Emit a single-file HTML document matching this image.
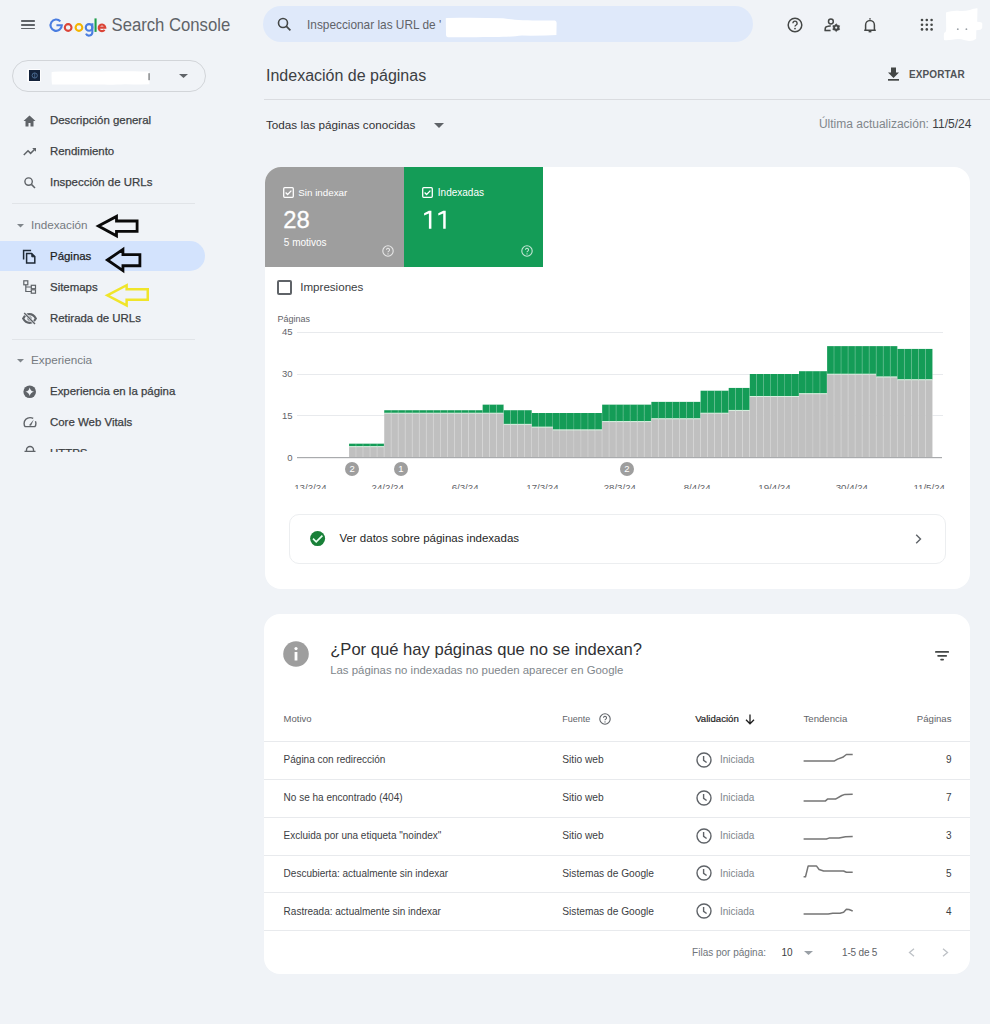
<!DOCTYPE html>
<html><head><meta charset="utf-8"><style>
html,body{margin:0;padding:0;width:990px;height:1024px;overflow:hidden;background:#f0f3f7;font-family:"Liberation Sans", sans-serif;}
.t{position:absolute;white-space:nowrap;line-height:1;}
svg{overflow:visible}
</style></head><body>
<div style="position:absolute;left:20.90px;top:19.90px;width:14.00px;height:1.80px;background:#5f6368;border-radius:0.8px"></div>
<div style="position:absolute;left:20.90px;top:23.75px;width:14.00px;height:1.80px;background:#5f6368;border-radius:0.8px"></div>
<div style="position:absolute;left:20.90px;top:27.60px;width:14.00px;height:1.80px;background:#5f6368;border-radius:0.8px"></div>
<svg style="position:absolute;left:0.00px;top:0.00px;" width="120" height="40" viewBox="0 0 120 40"><path d="M60.35 21.42A5.65 5.65 0 1 0 61.80 25.20H56.45" fill="none" stroke="#4a7de0" stroke-width="2.1"/><circle cx="68.15" cy="27.5" r="3.35" fill="none" stroke="#db4437" stroke-width="2.1"/><circle cx="78.95" cy="27.5" r="3.35" fill="none" stroke="#f4b400" stroke-width="2.1"/><circle cx="89.05" cy="27.4" r="3.3" fill="none" stroke="#4a7de0" stroke-width="2.1"/><path d="M92.35 23.2V32.3A3.3 3.3 0 0 1 86 33.6" fill="none" stroke="#4a7de0" stroke-width="2.1"/><path d="M95.55 18.4V31.9" fill="none" stroke="#1e9e4a" stroke-width="2.1"/><path d="M98.9 27.6H105.3A3.3 3.3 0 1 0 104.6 29.9" fill="none" stroke="#db4437" stroke-width="2.1"/></svg>
<div class="t" style="left:111.50px;top:18.36px;font-size:16.7px;color:#5f6368;font-weight:400;transform:scaleY(1.08);transform-origin:0 80%">Search Console</div>
<div style="position:absolute;left:262.50px;top:6.00px;width:490.50px;height:36.00px;background:#dfe9fa;border-radius:18px"></div>
<svg style="position:absolute;left:277.00px;top:17.00px;" width="16" height="16" viewBox="0 0 16 16"><circle cx="6" cy="6" r="4.5" fill="none" stroke="#444746" stroke-width="1.6"/><line x1="9.2" y1="9.2" x2="13.4" y2="13.4" stroke="#444746" stroke-width="1.7"/></svg>
<div class="t" style="left:307.00px;top:20.17px;font-size:11.85px;color:#5f6368;font-weight:400;">Inspeccionar las URL de '</div>
<svg style="position:absolute;left:0.00px;top:0.00px;" width="990" height="60" viewBox="0 0 990 60"><path d="M445.8 18.2Q447 17.6 470 17.8L503 18.2C514 20 526 20.6 555 20.4Q557 21 556.6 24L556.4 35Q545 35.8 522 35.6C510 37 498 37.4 448 37.2Q446 37 446 35z" fill="#fff"/></svg>
<svg style="position:absolute;left:787.00px;top:17.00px;" width="16" height="16" viewBox="0 0 16 16"><circle cx="8" cy="8" r="6.8" fill="none" stroke="#444746" stroke-width="1.5"/><path d="M5.9 6.2a2.1 2.1 0 1 1 3.2 1.8c-.7.4-1.1.8-1.1 1.6" fill="none" stroke="#444746" stroke-width="1.4"/><circle cx="8" cy="11.6" r=".9" fill="#444746"/></svg>
<svg style="position:absolute;left:0.00px;top:0.00px;" width="990" height="60" viewBox="0 0 990 60"><circle cx="830.9" cy="21.5" r="2.4" fill="none" stroke="#444746" stroke-width="1.5"/><path d="M825.2 30.6V28.8Q825.2 26.6 828 26.2Q829.5 25.9 830.8 26" fill="none" stroke="#444746" stroke-width="1.5"/><path d="M824.5 30.5H830.6" stroke="#444746" stroke-width="1.6"/><polygon points="836.20,23.80 837.65,25.19 839.58,25.75 839.10,27.70 839.58,29.65 837.65,30.21 836.20,31.60 834.75,30.21 832.82,29.65 833.30,27.70 832.82,25.75 834.75,25.19" fill="#444746" stroke="#444746" stroke-width="0.6" stroke-linejoin="round"/><circle cx="836.2" cy="27.7" r="1.1" fill="#f0f3f7"/></svg>
<svg style="position:absolute;left:862.00px;top:17.00px;" width="16" height="17" viewBox="0 0 16 17"><path d="M2.2 13.3h11.6M3.6 13.3V8a4.4 4.4 0 0 1 8.8 0v5.3" fill="none" stroke="#444746" stroke-width="1.5"/><line x1="8" y1="2.5" x2="8" y2="1.3" stroke="#444746" stroke-width="1.6"/><path d="M6.6 14.6h2.8" stroke="#444746" stroke-width="1.6"/></svg>
<svg style="position:absolute;left:919.80px;top:18.00px;" width="14" height="14" viewBox="0 0 14 14"><circle cx="2.0" cy="2.0" r="1.3" fill="#444746"/><circle cx="2.0" cy="6.7" r="1.3" fill="#444746"/><circle cx="2.0" cy="11.4" r="1.3" fill="#444746"/><circle cx="6.8" cy="2.0" r="1.3" fill="#444746"/><circle cx="6.8" cy="6.7" r="1.3" fill="#444746"/><circle cx="6.8" cy="11.4" r="1.3" fill="#444746"/><circle cx="11.6" cy="2.0" r="1.3" fill="#444746"/><circle cx="11.6" cy="6.7" r="1.3" fill="#444746"/><circle cx="11.6" cy="11.4" r="1.3" fill="#444746"/></svg>
<svg style="position:absolute;left:0.00px;top:0.00px;" width="990" height="60" viewBox="0 0 990 60"><path d="M946 12.4C950 11.5 954 10.4 958 10.8C962 11.2 966 11 970 10C973 9 975.5 8.2 977.5 8.4L977.2 21.8Q982 21.8 982.3 23.5L982.2 28Q981 30.3 976.3 30.2L976.2 38.8Q973 41.3 969 41C965 40.6 962 38.6 958 39C953 39.5 948 40.6 944 40Q943.6 35 944 33Q946 32.4 946.2 30z" fill="#fff"/><circle cx="957.8" cy="29.2" r="0.9" fill="#9aa0a6"/><circle cx="966.4" cy="29.2" r="0.9" fill="#9aa0a6"/></svg>
<div style="position:absolute;left:12.40px;top:60.00px;width:193.20px;height:31.80px;border:1px solid #d2d5d9;border-radius:16px;box-sizing:border-box"></div>
<div style="position:absolute;left:27.30px;top:68.60px;width:14.00px;height:13.60px;background:#fdfdfe;border-radius:1.5px"></div>
<div style="position:absolute;left:28.60px;top:69.90px;width:11.40px;height:11.00px;background:#13223a"></div>
<svg style="position:absolute;left:28.60px;top:69.90px;" width="12" height="11" viewBox="0 0 12 11"><circle cx="5.7" cy="5.5" r="2.6" fill="none" stroke="#4a6a90" stroke-width="1"/><path d="M5.7 2.9v5.2" stroke="#4a6a90" stroke-width="0.8"/></svg>
<svg style="position:absolute;left:0.00px;top:55.00px;" width="210" height="40" viewBox="0 0 210 40"><path d="M51.6 17.2Q52 16.6 60 16.6L100 16.4C120 16.2 135 16.4 149.3 16.6L149.4 29.3Q140 29.5 125 29.2C118 29.5 112 30 100 29.6L52 29.4Q51.4 25 51.6 17.2z" fill="#fff"/><rect x="148.6" y="18.2" width="0.9" height="7" fill="#3c4043"/></svg>
<svg style="position:absolute;left:179.00px;top:74.00px;" width="9" height="4" viewBox="0 0 9 4"><path d="M0 0h9L4.5 4z" fill="#5f6368"/></svg>
<div style="position:absolute;left:0.00px;top:240.80px;width:204.50px;height:30.60px;background:#d3e3fd;border-radius:0 15.3px 15.3px 0"></div>
<div class="t" style="left:50.00px;top:115.11px;font-size:11.45px;color:#3c4043;font-weight:400;-webkit-text-stroke:0.25px #3c4043">Descripción general</div>
<div class="t" style="left:50.00px;top:146.11px;font-size:11.45px;color:#3c4043;font-weight:400;-webkit-text-stroke:0.25px #3c4043">Rendimiento</div>
<div class="t" style="left:50.00px;top:177.11px;font-size:11.45px;color:#3c4043;font-weight:400;-webkit-text-stroke:0.25px #3c4043">Inspección de URLs</div>
<div class="t" style="left:50.00px;top:251.11px;font-size:11.45px;color:#1f1f1f;font-weight:400;-webkit-text-stroke:0.25px #1f1f1f">Páginas</div>
<div class="t" style="left:50.00px;top:282.11px;font-size:11.45px;color:#3c4043;font-weight:400;-webkit-text-stroke:0.25px #3c4043">Sitemaps</div>
<div class="t" style="left:50.00px;top:313.11px;font-size:11.45px;color:#3c4043;font-weight:400;-webkit-text-stroke:0.25px #3c4043">Retirada de URLs</div>
<div class="t" style="left:50.00px;top:386.11px;font-size:11.45px;color:#3c4043;font-weight:400;-webkit-text-stroke:0.25px #3c4043">Experiencia en la página</div>
<div class="t" style="left:50.00px;top:417.11px;font-size:11.45px;color:#3c4043;font-weight:400;-webkit-text-stroke:0.25px #3c4043">Core Web Vitals</div>
<div class="t" style="left:50.00px;top:448.11px;font-size:11.45px;color:#3c4043;font-weight:400;-webkit-text-stroke:0.25px #3c4043">HTTPS</div>
<div class="t" style="left:31.00px;top:218.70px;font-size:11.7px;color:#757a7f;font-weight:400;">Indexación</div>
<svg style="position:absolute;left:16.50px;top:223.50px;" width="7" height="4" viewBox="0 0 7 4"><path d="M0 0h7L3.5 3.5z" fill="#80868b"/></svg>
<div class="t" style="left:31.00px;top:353.70px;font-size:11.7px;color:#757a7f;font-weight:400;">Experiencia</div>
<svg style="position:absolute;left:16.50px;top:358.50px;" width="7" height="4" viewBox="0 0 7 4"><path d="M0 0h7L3.5 3.5z" fill="#80868b"/></svg>
<div style="position:absolute;left:12.00px;top:203.00px;width:183.00px;height:1.00px;background:#e1e4e8"></div>
<div style="position:absolute;left:12.00px;top:339.00px;width:183.00px;height:1.00px;background:#e1e4e8"></div>
<svg style="position:absolute;left:23.00px;top:114.50px;" width="13" height="12" viewBox="0 0 13 12"><path d="M6.5 0.5L0.5 6h2v5.5h3V8h2v3.5h3V6h2z" fill="#5f6368"/></svg>
<svg style="position:absolute;left:22.50px;top:147.00px;" width="14" height="9" viewBox="0 0 14 9"><path d="M0.8 8L5 3.8l2.6 2.6L12 2" fill="none" stroke="#5f6368" stroke-width="1.5"/><path d="M9.2 1h3.8v3.8z" fill="#5f6368"/></svg>
<svg style="position:absolute;left:23.50px;top:176.80px;" width="12" height="12" viewBox="0 0 12 12"><circle cx="4.6" cy="4.6" r="3.7" fill="none" stroke="#5f6368" stroke-width="1.4"/><line x1="7.4" y1="7.4" x2="11" y2="11" stroke="#5f6368" stroke-width="1.5"/></svg>
<svg style="position:absolute;left:22.00px;top:248.50px;" width="14" height="15" viewBox="0 0 14 15"><path d="M4.6 4.4V14h8.2V7.6L9.6 4.4z" fill="none" stroke="#1f2a36" stroke-width="1.5"/><path d="M9.8 4.6v3.2h3" fill="#1f2a36" stroke="#1f2a36" stroke-width="1"/><path d="M1.6 10.5V1.4h7.5" fill="none" stroke="#1f2a36" stroke-width="1.5"/></svg>
<svg style="position:absolute;left:22.50px;top:280.00px;" width="14" height="14" viewBox="0 0 14 14"><rect x="0.8" y="0.8" width="4" height="4" fill="none" stroke="#5f6368" stroke-width="1.2"/><rect x="8.3" y="5.3" width="4.2" height="3.4" fill="none" stroke="#5f6368" stroke-width="1.2"/><rect x="8.3" y="9.8" width="4.2" height="3.4" fill="none" stroke="#5f6368" stroke-width="1.2"/><path d="M2.8 4.8V11.5h5.5M2.8 7h5.5" fill="none" stroke="#5f6368" stroke-width="1.2"/></svg>
<svg style="position:absolute;left:22.00px;top:312.00px;" width="15" height="13" viewBox="0 0 15 13"><path d="M1.2 6.5C2.8 3.6 4.9 2.2 7.5 2.2s4.7 1.4 6.3 4.3C12.2 9.4 10.1 10.8 7.5 10.8S2.8 9.4 1.2 6.5z" fill="none" stroke="#5f6368" stroke-width="2.2"/><circle cx="7.5" cy="6.5" r="2.2" fill="#5f6368"/><line x1="2.2" y1="1" x2="13" y2="12" stroke="#f0f3f7" stroke-width="2.6"/><line x1="2.2" y1="1" x2="13" y2="12" stroke="#5f6368" stroke-width="1.4"/></svg>
<svg style="position:absolute;left:22.50px;top:384.50px;" width="14" height="14" viewBox="0 0 14 14"><circle cx="6.7" cy="6.7" r="6.3" fill="#5f6368"/><path d="M6.7 2.4Q7.4 6 11 6.7Q7.4 7.4 6.7 11Q6 7.4 2.4 6.7Q6 6 6.7 2.4z" fill="#f0f3f7"/></svg>
<svg style="position:absolute;left:22.50px;top:416.00px;" width="14" height="12" viewBox="0 0 14 12"><path d="M10.2 2.3Q8.8 1.6 7 1.6A5.9 5.9 0 0 0 1.1 7.5Q1.1 9.5 2.1 10.6H11.9Q12.9 9.5 12.9 7.5Q12.9 6.3 12.4 5.3" fill="none" stroke="#5f6368" stroke-width="1.4" stroke-linejoin="round"/><path d="M6 9.2L10.8 3.4L8 9.8z" fill="#5f6368"/></svg>
<svg style="position:absolute;left:22.50px;top:446.00px;" width="14" height="6" viewBox="0 0 14 6"><path d="M3.5 6V4a3.5 3.5 0 0 1 7 0v2M1.5 5.5h11" fill="none" stroke="#5f6368" stroke-width="1.4"/></svg>
<div style="position:absolute;left:0.00px;top:452.00px;width:250.00px;height:30.00px;background:#f0f3f7"></div>
<svg style="position:absolute;left:96.50px;top:215.20px;" width="42" height="23" viewBox="0 0 42 23"><path d="M1.4 11.100000000000009 L19.505 1.4 L19.505 5.994000000000005 L40.1 5.994000000000005 L40.1 16.42800000000001 L19.505 16.42800000000001 L19.505 20.80000000000002 Z" fill="none" stroke="#0a0a0a" stroke-width="2.8" stroke-linejoin="miter"/></svg>
<svg style="position:absolute;left:105.50px;top:247.60px;" width="36" height="25" viewBox="0 0 36 25"><path d="M1.4 12.000000000000014 L16.944000000000006 1.4 L16.944000000000006 6.720000000000009 L33.90000000000001 6.720000000000009 L33.90000000000001 17.76000000000002 L16.944000000000006 17.76000000000002 L16.944000000000006 22.60000000000003 Z" fill="none" stroke="#0a0a0a" stroke-width="2.8" stroke-linejoin="miter"/></svg>
<svg style="position:absolute;left:105.50px;top:284.20px;" width="44" height="24" viewBox="0 0 44 24"><path d="M1.25 11.300000000000011 L20.64 1.25 L20.64 5.198000000000006 L41.75 5.198000000000006 L41.75 15.820000000000014 L20.64 15.820000000000014 L20.64 21.350000000000023 Z" fill="none" stroke="#f0e52a" stroke-width="2.5" stroke-linejoin="miter"/></svg>
<div class="t" style="left:266.00px;top:68.06px;font-size:16px;color:#3c4043;font-weight:400;">Indexación de páginas</div>
<svg style="position:absolute;left:887.00px;top:66.50px;" width="13" height="14" viewBox="0 0 13 14"><path d="M4 0.5h5v5h3l-5.5 5.5L1 5.5h3z" fill="#444746"/><rect x="1" y="12" width="11" height="1.7" fill="#444746"/></svg>
<div class="t" style="left:909.00px;top:69.83px;font-size:10px;color:#505357;font-weight:700;letter-spacing:0.12px">EXPORTAR</div>
<div style="position:absolute;left:264.00px;top:99.00px;width:726.00px;height:1.00px;background:#dadce0"></div>
<div class="t" style="left:266.00px;top:118.90px;font-size:11.7px;color:#303134;font-weight:400;">Todas las páginas conocidas</div>
<svg style="position:absolute;left:433.50px;top:122.50px;" width="10" height="5" viewBox="0 0 10 5"><path d="M0 0h10L5 5z" fill="#5f6368"/></svg>
<div class="t" style="right:18.60px;top:117.64px;font-size:12px;color:#3c4043;font-weight:400;"><span style="color:#80868b">Última actualización:</span> 11/5/24</div>
<div style="position:absolute;left:264.50px;top:167.00px;width:705.50px;height:421.50px;background:#fff;border-radius:16px"></div>
<div style="position:absolute;left:264.50px;top:167.00px;width:139.30px;height:99.70px;background:#9e9e9e;border-top-left-radius:16px"></div>
<div style="position:absolute;left:403.80px;top:167.00px;width:139.00px;height:99.70px;background:#149c57"></div>
<svg style="position:absolute;left:282.80px;top:187.00px;" width="11" height="11" viewBox="0 0 11 11"><rect x="0.7" y="0.7" width="9.6" height="9.6" rx="1" fill="none" stroke="#fff" stroke-width="1.3"/><path d="M2.6 5.5l2 2 3.8-3.9" fill="none" stroke="#fff" stroke-width="1.3"/></svg>
<svg style="position:absolute;left:422.10px;top:187.00px;" width="11" height="11" viewBox="0 0 11 11"><rect x="0.7" y="0.7" width="9.6" height="9.6" rx="1" fill="none" stroke="#fff" stroke-width="1.3"/><path d="M2.6 5.5l2 2 3.8-3.9" fill="none" stroke="#fff" stroke-width="1.3"/></svg>
<div class="t" style="left:298.30px;top:187.90px;font-size:9.8px;color:#fff;font-weight:400;">Sin indexar</div>
<div class="t" style="left:437.80px;top:188.03px;font-size:10px;color:#fff;font-weight:400;">Indexadas</div>
<div class="t" style="left:283.30px;top:208.45px;font-size:23.8px;color:#fff;font-weight:400;-webkit-text-stroke:0.3px #fff">28</div>
<svg style="position:absolute;left:0.00px;top:0.00px;" width="990" height="300" viewBox="0 0 990 300"><path d="M431.4 210.7V228.7H428.9V213.6L424.1 215.6V213.3L428.9 210.7z" fill="#fff"/><path d="M445.7 210.7V228.7H443.2V213.6L438.3 215.6V213.3L443.2 210.7z" fill="#fff"/></svg>
<div class="t" style="left:283.80px;top:237.73px;font-size:10px;color:#fff;font-weight:400;">5 motivos</div>
<svg style="position:absolute;left:381.50px;top:244.60px;" width="12" height="12" viewBox="0 0 12 12"><circle cx="6" cy="6" r="5.2" fill="none" stroke="rgba(255,255,255,.75)" stroke-width="1.1"/><path d="M4.5 4.8a1.5 1.5 0 1 1 2.3 1.3c-.5.3-.8.6-.8 1.2" fill="none" stroke="rgba(255,255,255,.75)" stroke-width="1.1"/><circle cx="6" cy="8.9" r=".7" fill="rgba(255,255,255,.75)"/></svg>
<svg style="position:absolute;left:521.00px;top:244.50px;" width="12" height="12" viewBox="0 0 12 12"><circle cx="6" cy="6" r="5.2" fill="none" stroke="rgba(255,255,255,.75)" stroke-width="1.1"/><path d="M4.5 4.8a1.5 1.5 0 1 1 2.3 1.3c-.5.3-.8.6-.8 1.2" fill="none" stroke="rgba(255,255,255,.75)" stroke-width="1.1"/><circle cx="6" cy="8.9" r=".7" fill="rgba(255,255,255,.75)"/></svg>
<div style="position:absolute;left:277.10px;top:279.70px;width:15.00px;height:15.00px;border:2px solid #5f6368;border-radius:2px;box-sizing:border-box"></div>
<div class="t" style="left:300.20px;top:281.48px;font-size:11.6px;color:#3c4043;font-weight:400;">Impresiones</div>
<div class="t" style="left:277.60px;top:314.88px;font-size:9px;color:#5f6368;font-weight:400;">Páginas</div>
<div class="t" style="right:697.50px;top:327.36px;font-size:9.5px;color:#5f6368;font-weight:400;">45</div>
<div style="position:absolute;left:296.50px;top:331.70px;width:646.00px;height:1.00px;background:#e8eaed"></div>
<div class="t" style="right:697.50px;top:369.16px;font-size:9.5px;color:#5f6368;font-weight:400;">30</div>
<div style="position:absolute;left:296.50px;top:373.50px;width:646.00px;height:1.00px;background:#e8eaed"></div>
<div class="t" style="right:697.50px;top:410.96px;font-size:9.5px;color:#5f6368;font-weight:400;">15</div>
<div style="position:absolute;left:296.50px;top:415.30px;width:646.00px;height:1.00px;background:#e8eaed"></div>
<div class="t" style="right:697.50px;top:452.76px;font-size:9.5px;color:#5f6368;font-weight:400;">0</div>
<svg style="position:absolute;left:0.00px;top:0.00px;pointer-events:none" width="990" height="1024" viewBox="0 0 990 1024"><rect x="349.08" y="446.45" width="7.03" height="11.15" fill="#c0c0c0"/><rect x="349.08" y="443.67" width="7.03" height="2.79" fill="#149c57"/><rect x="349.08" y="446.15" width="7.03" height="1" fill="#d7f0df"/><rect x="355.61" y="443.67" width="0.7" height="13.93" fill="rgba(255,255,255,.35)"/><rect x="356.11" y="446.45" width="7.03" height="11.15" fill="#c0c0c0"/><rect x="356.11" y="443.67" width="7.03" height="2.79" fill="#149c57"/><rect x="356.11" y="446.15" width="7.03" height="1" fill="#d7f0df"/><rect x="362.64" y="443.67" width="0.7" height="13.93" fill="rgba(255,255,255,.35)"/><rect x="363.14" y="446.45" width="7.03" height="11.15" fill="#c0c0c0"/><rect x="363.14" y="443.67" width="7.03" height="2.79" fill="#149c57"/><rect x="363.14" y="446.15" width="7.03" height="1" fill="#d7f0df"/><rect x="369.67" y="443.67" width="0.7" height="13.93" fill="rgba(255,255,255,.35)"/><rect x="370.17" y="446.45" width="7.03" height="11.15" fill="#c0c0c0"/><rect x="370.17" y="443.67" width="7.03" height="2.79" fill="#149c57"/><rect x="370.17" y="446.15" width="7.03" height="1" fill="#d7f0df"/><rect x="376.70" y="443.67" width="0.7" height="13.93" fill="rgba(255,255,255,.35)"/><rect x="377.20" y="446.45" width="7.03" height="11.15" fill="#c0c0c0"/><rect x="377.20" y="443.67" width="7.03" height="2.79" fill="#149c57"/><rect x="377.20" y="446.15" width="7.03" height="1" fill="#d7f0df"/><rect x="383.73" y="443.67" width="0.7" height="13.93" fill="rgba(255,255,255,.35)"/><rect x="384.23" y="413.01" width="7.03" height="44.59" fill="#c0c0c0"/><rect x="384.23" y="410.23" width="7.03" height="2.79" fill="#149c57"/><rect x="384.23" y="412.71" width="7.03" height="1" fill="#d7f0df"/><rect x="390.76" y="410.23" width="0.7" height="47.37" fill="rgba(255,255,255,.35)"/><rect x="391.26" y="413.01" width="7.03" height="44.59" fill="#c0c0c0"/><rect x="391.26" y="410.23" width="7.03" height="2.79" fill="#149c57"/><rect x="391.26" y="412.71" width="7.03" height="1" fill="#d7f0df"/><rect x="397.79" y="410.23" width="0.7" height="47.37" fill="rgba(255,255,255,.35)"/><rect x="398.29" y="413.01" width="7.03" height="44.59" fill="#c0c0c0"/><rect x="398.29" y="410.23" width="7.03" height="2.79" fill="#149c57"/><rect x="398.29" y="412.71" width="7.03" height="1" fill="#d7f0df"/><rect x="404.82" y="410.23" width="0.7" height="47.37" fill="rgba(255,255,255,.35)"/><rect x="405.32" y="413.01" width="7.03" height="44.59" fill="#c0c0c0"/><rect x="405.32" y="410.23" width="7.03" height="2.79" fill="#149c57"/><rect x="405.32" y="412.71" width="7.03" height="1" fill="#d7f0df"/><rect x="411.85" y="410.23" width="0.7" height="47.37" fill="rgba(255,255,255,.35)"/><rect x="412.35" y="413.01" width="7.03" height="44.59" fill="#c0c0c0"/><rect x="412.35" y="410.23" width="7.03" height="2.79" fill="#149c57"/><rect x="412.35" y="412.71" width="7.03" height="1" fill="#d7f0df"/><rect x="418.88" y="410.23" width="0.7" height="47.37" fill="rgba(255,255,255,.35)"/><rect x="419.38" y="413.01" width="7.03" height="44.59" fill="#c0c0c0"/><rect x="419.38" y="410.23" width="7.03" height="2.79" fill="#149c57"/><rect x="419.38" y="412.71" width="7.03" height="1" fill="#d7f0df"/><rect x="425.91" y="410.23" width="0.7" height="47.37" fill="rgba(255,255,255,.35)"/><rect x="426.41" y="413.01" width="7.03" height="44.59" fill="#c0c0c0"/><rect x="426.41" y="410.23" width="7.03" height="2.79" fill="#149c57"/><rect x="426.41" y="412.71" width="7.03" height="1" fill="#d7f0df"/><rect x="432.94" y="410.23" width="0.7" height="47.37" fill="rgba(255,255,255,.35)"/><rect x="433.44" y="413.01" width="7.03" height="44.59" fill="#c0c0c0"/><rect x="433.44" y="410.23" width="7.03" height="2.79" fill="#149c57"/><rect x="433.44" y="412.71" width="7.03" height="1" fill="#d7f0df"/><rect x="439.97" y="410.23" width="0.7" height="47.37" fill="rgba(255,255,255,.35)"/><rect x="440.47" y="413.01" width="7.03" height="44.59" fill="#c0c0c0"/><rect x="440.47" y="410.23" width="7.03" height="2.79" fill="#149c57"/><rect x="440.47" y="412.71" width="7.03" height="1" fill="#d7f0df"/><rect x="447.00" y="410.23" width="0.7" height="47.37" fill="rgba(255,255,255,.35)"/><rect x="447.50" y="413.01" width="7.03" height="44.59" fill="#c0c0c0"/><rect x="447.50" y="410.23" width="7.03" height="2.79" fill="#149c57"/><rect x="447.50" y="412.71" width="7.03" height="1" fill="#d7f0df"/><rect x="454.03" y="410.23" width="0.7" height="47.37" fill="rgba(255,255,255,.35)"/><rect x="454.53" y="413.01" width="7.03" height="44.59" fill="#c0c0c0"/><rect x="454.53" y="410.23" width="7.03" height="2.79" fill="#149c57"/><rect x="454.53" y="412.71" width="7.03" height="1" fill="#d7f0df"/><rect x="461.06" y="410.23" width="0.7" height="47.37" fill="rgba(255,255,255,.35)"/><rect x="461.56" y="413.01" width="7.03" height="44.59" fill="#c0c0c0"/><rect x="461.56" y="410.23" width="7.03" height="2.79" fill="#149c57"/><rect x="461.56" y="412.71" width="7.03" height="1" fill="#d7f0df"/><rect x="468.09" y="410.23" width="0.7" height="47.37" fill="rgba(255,255,255,.35)"/><rect x="468.59" y="413.01" width="7.03" height="44.59" fill="#c0c0c0"/><rect x="468.59" y="410.23" width="7.03" height="2.79" fill="#149c57"/><rect x="468.59" y="412.71" width="7.03" height="1" fill="#d7f0df"/><rect x="475.12" y="410.23" width="0.7" height="47.37" fill="rgba(255,255,255,.35)"/><rect x="475.62" y="413.01" width="7.03" height="44.59" fill="#c0c0c0"/><rect x="475.62" y="410.23" width="7.03" height="2.79" fill="#149c57"/><rect x="475.62" y="412.71" width="7.03" height="1" fill="#d7f0df"/><rect x="482.15" y="410.23" width="0.7" height="47.37" fill="rgba(255,255,255,.35)"/><rect x="482.65" y="413.01" width="7.03" height="44.59" fill="#c0c0c0"/><rect x="482.65" y="404.65" width="7.03" height="8.36" fill="#149c57"/><rect x="482.65" y="412.71" width="7.03" height="1" fill="#d7f0df"/><rect x="489.18" y="404.65" width="0.7" height="52.95" fill="rgba(255,255,255,.35)"/><rect x="489.68" y="413.01" width="7.03" height="44.59" fill="#c0c0c0"/><rect x="489.68" y="404.65" width="7.03" height="8.36" fill="#149c57"/><rect x="489.68" y="412.71" width="7.03" height="1" fill="#d7f0df"/><rect x="496.21" y="404.65" width="0.7" height="52.95" fill="rgba(255,255,255,.35)"/><rect x="496.71" y="413.01" width="7.03" height="44.59" fill="#c0c0c0"/><rect x="496.71" y="404.65" width="7.03" height="8.36" fill="#149c57"/><rect x="496.71" y="412.71" width="7.03" height="1" fill="#d7f0df"/><rect x="503.24" y="404.65" width="0.7" height="52.95" fill="rgba(255,255,255,.35)"/><rect x="503.74" y="424.16" width="7.03" height="33.44" fill="#c0c0c0"/><rect x="503.74" y="410.23" width="7.03" height="13.93" fill="#149c57"/><rect x="503.74" y="423.86" width="7.03" height="1" fill="#d7f0df"/><rect x="510.27" y="410.23" width="0.7" height="47.37" fill="rgba(255,255,255,.35)"/><rect x="510.77" y="424.16" width="7.03" height="33.44" fill="#c0c0c0"/><rect x="510.77" y="410.23" width="7.03" height="13.93" fill="#149c57"/><rect x="510.77" y="423.86" width="7.03" height="1" fill="#d7f0df"/><rect x="517.30" y="410.23" width="0.7" height="47.37" fill="rgba(255,255,255,.35)"/><rect x="517.80" y="424.16" width="7.03" height="33.44" fill="#c0c0c0"/><rect x="517.80" y="410.23" width="7.03" height="13.93" fill="#149c57"/><rect x="517.80" y="423.86" width="7.03" height="1" fill="#d7f0df"/><rect x="524.33" y="410.23" width="0.7" height="47.37" fill="rgba(255,255,255,.35)"/><rect x="524.83" y="424.16" width="7.03" height="33.44" fill="#c0c0c0"/><rect x="524.83" y="410.23" width="7.03" height="13.93" fill="#149c57"/><rect x="524.83" y="423.86" width="7.03" height="1" fill="#d7f0df"/><rect x="531.36" y="410.23" width="0.7" height="47.37" fill="rgba(255,255,255,.35)"/><rect x="531.86" y="426.95" width="7.03" height="30.65" fill="#c0c0c0"/><rect x="531.86" y="413.01" width="7.03" height="13.93" fill="#149c57"/><rect x="531.86" y="426.65" width="7.03" height="1" fill="#d7f0df"/><rect x="538.39" y="413.01" width="0.7" height="44.59" fill="rgba(255,255,255,.35)"/><rect x="538.89" y="426.95" width="7.03" height="30.65" fill="#c0c0c0"/><rect x="538.89" y="413.01" width="7.03" height="13.93" fill="#149c57"/><rect x="538.89" y="426.65" width="7.03" height="1" fill="#d7f0df"/><rect x="545.42" y="413.01" width="0.7" height="44.59" fill="rgba(255,255,255,.35)"/><rect x="545.92" y="426.95" width="7.03" height="30.65" fill="#c0c0c0"/><rect x="545.92" y="413.01" width="7.03" height="13.93" fill="#149c57"/><rect x="545.92" y="426.65" width="7.03" height="1" fill="#d7f0df"/><rect x="552.45" y="413.01" width="0.7" height="44.59" fill="rgba(255,255,255,.35)"/><rect x="552.95" y="429.73" width="7.03" height="27.87" fill="#c0c0c0"/><rect x="552.95" y="413.01" width="7.03" height="16.72" fill="#149c57"/><rect x="552.95" y="429.43" width="7.03" height="1" fill="#d7f0df"/><rect x="559.48" y="413.01" width="0.7" height="44.59" fill="rgba(255,255,255,.35)"/><rect x="559.98" y="429.73" width="7.03" height="27.87" fill="#c0c0c0"/><rect x="559.98" y="413.01" width="7.03" height="16.72" fill="#149c57"/><rect x="559.98" y="429.43" width="7.03" height="1" fill="#d7f0df"/><rect x="566.51" y="413.01" width="0.7" height="44.59" fill="rgba(255,255,255,.35)"/><rect x="567.01" y="429.73" width="7.03" height="27.87" fill="#c0c0c0"/><rect x="567.01" y="413.01" width="7.03" height="16.72" fill="#149c57"/><rect x="567.01" y="429.43" width="7.03" height="1" fill="#d7f0df"/><rect x="573.54" y="413.01" width="0.7" height="44.59" fill="rgba(255,255,255,.35)"/><rect x="574.04" y="429.73" width="7.03" height="27.87" fill="#c0c0c0"/><rect x="574.04" y="413.01" width="7.03" height="16.72" fill="#149c57"/><rect x="574.04" y="429.43" width="7.03" height="1" fill="#d7f0df"/><rect x="580.57" y="413.01" width="0.7" height="44.59" fill="rgba(255,255,255,.35)"/><rect x="581.07" y="429.73" width="7.03" height="27.87" fill="#c0c0c0"/><rect x="581.07" y="413.01" width="7.03" height="16.72" fill="#149c57"/><rect x="581.07" y="429.43" width="7.03" height="1" fill="#d7f0df"/><rect x="587.60" y="413.01" width="0.7" height="44.59" fill="rgba(255,255,255,.35)"/><rect x="588.10" y="429.73" width="7.03" height="27.87" fill="#c0c0c0"/><rect x="588.10" y="413.01" width="7.03" height="16.72" fill="#149c57"/><rect x="588.10" y="429.43" width="7.03" height="1" fill="#d7f0df"/><rect x="594.63" y="413.01" width="0.7" height="44.59" fill="rgba(255,255,255,.35)"/><rect x="595.13" y="429.73" width="7.03" height="27.87" fill="#c0c0c0"/><rect x="595.13" y="413.01" width="7.03" height="16.72" fill="#149c57"/><rect x="595.13" y="429.43" width="7.03" height="1" fill="#d7f0df"/><rect x="601.66" y="413.01" width="0.7" height="44.59" fill="rgba(255,255,255,.35)"/><rect x="602.16" y="421.37" width="7.03" height="36.23" fill="#c0c0c0"/><rect x="602.16" y="404.65" width="7.03" height="16.72" fill="#149c57"/><rect x="602.16" y="421.07" width="7.03" height="1" fill="#d7f0df"/><rect x="608.69" y="404.65" width="0.7" height="52.95" fill="rgba(255,255,255,.35)"/><rect x="609.19" y="421.37" width="7.03" height="36.23" fill="#c0c0c0"/><rect x="609.19" y="404.65" width="7.03" height="16.72" fill="#149c57"/><rect x="609.19" y="421.07" width="7.03" height="1" fill="#d7f0df"/><rect x="615.72" y="404.65" width="0.7" height="52.95" fill="rgba(255,255,255,.35)"/><rect x="616.22" y="421.37" width="7.03" height="36.23" fill="#c0c0c0"/><rect x="616.22" y="404.65" width="7.03" height="16.72" fill="#149c57"/><rect x="616.22" y="421.07" width="7.03" height="1" fill="#d7f0df"/><rect x="622.75" y="404.65" width="0.7" height="52.95" fill="rgba(255,255,255,.35)"/><rect x="623.25" y="421.37" width="7.03" height="36.23" fill="#c0c0c0"/><rect x="623.25" y="404.65" width="7.03" height="16.72" fill="#149c57"/><rect x="623.25" y="421.07" width="7.03" height="1" fill="#d7f0df"/><rect x="629.78" y="404.65" width="0.7" height="52.95" fill="rgba(255,255,255,.35)"/><rect x="630.28" y="421.37" width="7.03" height="36.23" fill="#c0c0c0"/><rect x="630.28" y="404.65" width="7.03" height="16.72" fill="#149c57"/><rect x="630.28" y="421.07" width="7.03" height="1" fill="#d7f0df"/><rect x="636.81" y="404.65" width="0.7" height="52.95" fill="rgba(255,255,255,.35)"/><rect x="637.31" y="421.37" width="7.03" height="36.23" fill="#c0c0c0"/><rect x="637.31" y="404.65" width="7.03" height="16.72" fill="#149c57"/><rect x="637.31" y="421.07" width="7.03" height="1" fill="#d7f0df"/><rect x="643.84" y="404.65" width="0.7" height="52.95" fill="rgba(255,255,255,.35)"/><rect x="644.34" y="421.37" width="7.03" height="36.23" fill="#c0c0c0"/><rect x="644.34" y="404.65" width="7.03" height="16.72" fill="#149c57"/><rect x="644.34" y="421.07" width="7.03" height="1" fill="#d7f0df"/><rect x="650.87" y="404.65" width="0.7" height="52.95" fill="rgba(255,255,255,.35)"/><rect x="651.37" y="418.59" width="7.03" height="39.01" fill="#c0c0c0"/><rect x="651.37" y="401.87" width="7.03" height="16.72" fill="#149c57"/><rect x="651.37" y="418.29" width="7.03" height="1" fill="#d7f0df"/><rect x="657.90" y="401.87" width="0.7" height="55.73" fill="rgba(255,255,255,.35)"/><rect x="658.40" y="418.59" width="7.03" height="39.01" fill="#c0c0c0"/><rect x="658.40" y="401.87" width="7.03" height="16.72" fill="#149c57"/><rect x="658.40" y="418.29" width="7.03" height="1" fill="#d7f0df"/><rect x="664.93" y="401.87" width="0.7" height="55.73" fill="rgba(255,255,255,.35)"/><rect x="665.43" y="418.59" width="7.03" height="39.01" fill="#c0c0c0"/><rect x="665.43" y="401.87" width="7.03" height="16.72" fill="#149c57"/><rect x="665.43" y="418.29" width="7.03" height="1" fill="#d7f0df"/><rect x="671.96" y="401.87" width="0.7" height="55.73" fill="rgba(255,255,255,.35)"/><rect x="672.46" y="418.59" width="7.03" height="39.01" fill="#c0c0c0"/><rect x="672.46" y="401.87" width="7.03" height="16.72" fill="#149c57"/><rect x="672.46" y="418.29" width="7.03" height="1" fill="#d7f0df"/><rect x="678.99" y="401.87" width="0.7" height="55.73" fill="rgba(255,255,255,.35)"/><rect x="679.49" y="418.59" width="7.03" height="39.01" fill="#c0c0c0"/><rect x="679.49" y="401.87" width="7.03" height="16.72" fill="#149c57"/><rect x="679.49" y="418.29" width="7.03" height="1" fill="#d7f0df"/><rect x="686.02" y="401.87" width="0.7" height="55.73" fill="rgba(255,255,255,.35)"/><rect x="686.52" y="418.59" width="7.03" height="39.01" fill="#c0c0c0"/><rect x="686.52" y="401.87" width="7.03" height="16.72" fill="#149c57"/><rect x="686.52" y="418.29" width="7.03" height="1" fill="#d7f0df"/><rect x="693.05" y="401.87" width="0.7" height="55.73" fill="rgba(255,255,255,.35)"/><rect x="693.55" y="418.59" width="7.03" height="39.01" fill="#c0c0c0"/><rect x="693.55" y="401.87" width="7.03" height="16.72" fill="#149c57"/><rect x="693.55" y="418.29" width="7.03" height="1" fill="#d7f0df"/><rect x="700.08" y="401.87" width="0.7" height="55.73" fill="rgba(255,255,255,.35)"/><rect x="700.58" y="413.01" width="7.03" height="44.59" fill="#c0c0c0"/><rect x="700.58" y="390.72" width="7.03" height="22.29" fill="#149c57"/><rect x="700.58" y="412.71" width="7.03" height="1" fill="#d7f0df"/><rect x="707.11" y="390.72" width="0.7" height="66.88" fill="rgba(255,255,255,.35)"/><rect x="707.61" y="413.01" width="7.03" height="44.59" fill="#c0c0c0"/><rect x="707.61" y="390.72" width="7.03" height="22.29" fill="#149c57"/><rect x="707.61" y="412.71" width="7.03" height="1" fill="#d7f0df"/><rect x="714.14" y="390.72" width="0.7" height="66.88" fill="rgba(255,255,255,.35)"/><rect x="714.64" y="413.01" width="7.03" height="44.59" fill="#c0c0c0"/><rect x="714.64" y="390.72" width="7.03" height="22.29" fill="#149c57"/><rect x="714.64" y="412.71" width="7.03" height="1" fill="#d7f0df"/><rect x="721.17" y="390.72" width="0.7" height="66.88" fill="rgba(255,255,255,.35)"/><rect x="721.67" y="413.01" width="7.03" height="44.59" fill="#c0c0c0"/><rect x="721.67" y="390.72" width="7.03" height="22.29" fill="#149c57"/><rect x="721.67" y="412.71" width="7.03" height="1" fill="#d7f0df"/><rect x="728.20" y="390.72" width="0.7" height="66.88" fill="rgba(255,255,255,.35)"/><rect x="728.70" y="410.23" width="7.03" height="47.37" fill="#c0c0c0"/><rect x="728.70" y="387.93" width="7.03" height="22.29" fill="#149c57"/><rect x="728.70" y="409.93" width="7.03" height="1" fill="#d7f0df"/><rect x="735.23" y="387.93" width="0.7" height="69.67" fill="rgba(255,255,255,.35)"/><rect x="735.73" y="410.23" width="7.03" height="47.37" fill="#c0c0c0"/><rect x="735.73" y="387.93" width="7.03" height="22.29" fill="#149c57"/><rect x="735.73" y="409.93" width="7.03" height="1" fill="#d7f0df"/><rect x="742.26" y="387.93" width="0.7" height="69.67" fill="rgba(255,255,255,.35)"/><rect x="742.76" y="410.23" width="7.03" height="47.37" fill="#c0c0c0"/><rect x="742.76" y="387.93" width="7.03" height="22.29" fill="#149c57"/><rect x="742.76" y="409.93" width="7.03" height="1" fill="#d7f0df"/><rect x="749.29" y="387.93" width="0.7" height="69.67" fill="rgba(255,255,255,.35)"/><rect x="749.79" y="396.29" width="7.03" height="61.31" fill="#c0c0c0"/><rect x="749.79" y="374.00" width="7.03" height="22.29" fill="#149c57"/><rect x="749.79" y="395.99" width="7.03" height="1" fill="#d7f0df"/><rect x="756.32" y="374.00" width="0.7" height="83.60" fill="rgba(255,255,255,.35)"/><rect x="756.82" y="396.29" width="7.03" height="61.31" fill="#c0c0c0"/><rect x="756.82" y="374.00" width="7.03" height="22.29" fill="#149c57"/><rect x="756.82" y="395.99" width="7.03" height="1" fill="#d7f0df"/><rect x="763.35" y="374.00" width="0.7" height="83.60" fill="rgba(255,255,255,.35)"/><rect x="763.85" y="396.29" width="7.03" height="61.31" fill="#c0c0c0"/><rect x="763.85" y="374.00" width="7.03" height="22.29" fill="#149c57"/><rect x="763.85" y="395.99" width="7.03" height="1" fill="#d7f0df"/><rect x="770.38" y="374.00" width="0.7" height="83.60" fill="rgba(255,255,255,.35)"/><rect x="770.88" y="396.29" width="7.03" height="61.31" fill="#c0c0c0"/><rect x="770.88" y="374.00" width="7.03" height="22.29" fill="#149c57"/><rect x="770.88" y="395.99" width="7.03" height="1" fill="#d7f0df"/><rect x="777.41" y="374.00" width="0.7" height="83.60" fill="rgba(255,255,255,.35)"/><rect x="777.91" y="396.29" width="7.03" height="61.31" fill="#c0c0c0"/><rect x="777.91" y="374.00" width="7.03" height="22.29" fill="#149c57"/><rect x="777.91" y="395.99" width="7.03" height="1" fill="#d7f0df"/><rect x="784.44" y="374.00" width="0.7" height="83.60" fill="rgba(255,255,255,.35)"/><rect x="784.94" y="396.29" width="7.03" height="61.31" fill="#c0c0c0"/><rect x="784.94" y="374.00" width="7.03" height="22.29" fill="#149c57"/><rect x="784.94" y="395.99" width="7.03" height="1" fill="#d7f0df"/><rect x="791.47" y="374.00" width="0.7" height="83.60" fill="rgba(255,255,255,.35)"/><rect x="791.97" y="396.29" width="7.03" height="61.31" fill="#c0c0c0"/><rect x="791.97" y="374.00" width="7.03" height="22.29" fill="#149c57"/><rect x="791.97" y="395.99" width="7.03" height="1" fill="#d7f0df"/><rect x="798.50" y="374.00" width="0.7" height="83.60" fill="rgba(255,255,255,.35)"/><rect x="799.00" y="393.51" width="7.03" height="64.09" fill="#c0c0c0"/><rect x="799.00" y="371.21" width="7.03" height="22.29" fill="#149c57"/><rect x="799.00" y="393.21" width="7.03" height="1" fill="#d7f0df"/><rect x="805.53" y="371.21" width="0.7" height="86.39" fill="rgba(255,255,255,.35)"/><rect x="806.03" y="393.51" width="7.03" height="64.09" fill="#c0c0c0"/><rect x="806.03" y="371.21" width="7.03" height="22.29" fill="#149c57"/><rect x="806.03" y="393.21" width="7.03" height="1" fill="#d7f0df"/><rect x="812.56" y="371.21" width="0.7" height="86.39" fill="rgba(255,255,255,.35)"/><rect x="813.06" y="393.51" width="7.03" height="64.09" fill="#c0c0c0"/><rect x="813.06" y="371.21" width="7.03" height="22.29" fill="#149c57"/><rect x="813.06" y="393.21" width="7.03" height="1" fill="#d7f0df"/><rect x="819.59" y="371.21" width="0.7" height="86.39" fill="rgba(255,255,255,.35)"/><rect x="820.09" y="393.51" width="7.03" height="64.09" fill="#c0c0c0"/><rect x="820.09" y="371.21" width="7.03" height="22.29" fill="#149c57"/><rect x="820.09" y="393.21" width="7.03" height="1" fill="#d7f0df"/><rect x="826.62" y="371.21" width="0.7" height="86.39" fill="rgba(255,255,255,.35)"/><rect x="827.12" y="374.00" width="7.03" height="83.60" fill="#c0c0c0"/><rect x="827.12" y="346.13" width="7.03" height="27.87" fill="#149c57"/><rect x="827.12" y="373.70" width="7.03" height="1" fill="#d7f0df"/><rect x="833.65" y="346.13" width="0.7" height="111.47" fill="rgba(255,255,255,.35)"/><rect x="834.15" y="374.00" width="7.03" height="83.60" fill="#c0c0c0"/><rect x="834.15" y="346.13" width="7.03" height="27.87" fill="#149c57"/><rect x="834.15" y="373.70" width="7.03" height="1" fill="#d7f0df"/><rect x="840.68" y="346.13" width="0.7" height="111.47" fill="rgba(255,255,255,.35)"/><rect x="841.18" y="374.00" width="7.03" height="83.60" fill="#c0c0c0"/><rect x="841.18" y="346.13" width="7.03" height="27.87" fill="#149c57"/><rect x="841.18" y="373.70" width="7.03" height="1" fill="#d7f0df"/><rect x="847.71" y="346.13" width="0.7" height="111.47" fill="rgba(255,255,255,.35)"/><rect x="848.21" y="374.00" width="7.03" height="83.60" fill="#c0c0c0"/><rect x="848.21" y="346.13" width="7.03" height="27.87" fill="#149c57"/><rect x="848.21" y="373.70" width="7.03" height="1" fill="#d7f0df"/><rect x="854.74" y="346.13" width="0.7" height="111.47" fill="rgba(255,255,255,.35)"/><rect x="855.24" y="374.00" width="7.03" height="83.60" fill="#c0c0c0"/><rect x="855.24" y="346.13" width="7.03" height="27.87" fill="#149c57"/><rect x="855.24" y="373.70" width="7.03" height="1" fill="#d7f0df"/><rect x="861.77" y="346.13" width="0.7" height="111.47" fill="rgba(255,255,255,.35)"/><rect x="862.27" y="374.00" width="7.03" height="83.60" fill="#c0c0c0"/><rect x="862.27" y="346.13" width="7.03" height="27.87" fill="#149c57"/><rect x="862.27" y="373.70" width="7.03" height="1" fill="#d7f0df"/><rect x="868.80" y="346.13" width="0.7" height="111.47" fill="rgba(255,255,255,.35)"/><rect x="869.30" y="374.00" width="7.03" height="83.60" fill="#c0c0c0"/><rect x="869.30" y="346.13" width="7.03" height="27.87" fill="#149c57"/><rect x="869.30" y="373.70" width="7.03" height="1" fill="#d7f0df"/><rect x="875.83" y="346.13" width="0.7" height="111.47" fill="rgba(255,255,255,.35)"/><rect x="876.33" y="376.79" width="7.03" height="80.81" fill="#c0c0c0"/><rect x="876.33" y="346.13" width="7.03" height="30.65" fill="#149c57"/><rect x="876.33" y="376.49" width="7.03" height="1" fill="#d7f0df"/><rect x="882.86" y="346.13" width="0.7" height="111.47" fill="rgba(255,255,255,.35)"/><rect x="883.36" y="376.79" width="7.03" height="80.81" fill="#c0c0c0"/><rect x="883.36" y="346.13" width="7.03" height="30.65" fill="#149c57"/><rect x="883.36" y="376.49" width="7.03" height="1" fill="#d7f0df"/><rect x="889.89" y="346.13" width="0.7" height="111.47" fill="rgba(255,255,255,.35)"/><rect x="890.39" y="376.79" width="7.03" height="80.81" fill="#c0c0c0"/><rect x="890.39" y="346.13" width="7.03" height="30.65" fill="#149c57"/><rect x="890.39" y="376.49" width="7.03" height="1" fill="#d7f0df"/><rect x="896.92" y="346.13" width="0.7" height="111.47" fill="rgba(255,255,255,.35)"/><rect x="897.42" y="379.57" width="7.03" height="78.03" fill="#c0c0c0"/><rect x="897.42" y="348.92" width="7.03" height="30.65" fill="#149c57"/><rect x="897.42" y="379.27" width="7.03" height="1" fill="#d7f0df"/><rect x="903.95" y="348.92" width="0.7" height="108.68" fill="rgba(255,255,255,.35)"/><rect x="904.45" y="379.57" width="7.03" height="78.03" fill="#c0c0c0"/><rect x="904.45" y="348.92" width="7.03" height="30.65" fill="#149c57"/><rect x="904.45" y="379.27" width="7.03" height="1" fill="#d7f0df"/><rect x="910.98" y="348.92" width="0.7" height="108.68" fill="rgba(255,255,255,.35)"/><rect x="911.48" y="379.57" width="7.03" height="78.03" fill="#c0c0c0"/><rect x="911.48" y="348.92" width="7.03" height="30.65" fill="#149c57"/><rect x="911.48" y="379.27" width="7.03" height="1" fill="#d7f0df"/><rect x="918.01" y="348.92" width="0.7" height="108.68" fill="rgba(255,255,255,.35)"/><rect x="918.51" y="379.57" width="7.03" height="78.03" fill="#c0c0c0"/><rect x="918.51" y="348.92" width="7.03" height="30.65" fill="#149c57"/><rect x="918.51" y="379.27" width="7.03" height="1" fill="#d7f0df"/><rect x="925.04" y="348.92" width="0.7" height="108.68" fill="rgba(255,255,255,.35)"/><rect x="925.54" y="379.57" width="7.03" height="78.03" fill="#c0c0c0"/><rect x="925.54" y="348.92" width="7.03" height="30.65" fill="#149c57"/><rect x="925.54" y="379.27" width="7.03" height="1" fill="#d7f0df"/><rect x="932.07" y="348.92" width="0.7" height="108.68" fill="rgba(255,255,255,.35)"/><rect x="297" y="457.00" width="645" height="1.2" fill="#a9abad"/></svg>
<div style="position:absolute;left:345.20px;top:461.60px;width:14.00px;height:14.00px;background:#9e9e9e;border-radius:50%"></div>
<div class="t" style="right:637.80px;top:463.76px;font-size:9.5px;color:#fff;font-weight:400;transform:translateX(50%)">2</div>
<div style="position:absolute;left:394.00px;top:461.60px;width:14.00px;height:14.00px;background:#9e9e9e;border-radius:50%"></div>
<div class="t" style="right:589.00px;top:463.76px;font-size:9.5px;color:#fff;font-weight:400;transform:translateX(50%)">1</div>
<div style="position:absolute;left:620.00px;top:461.60px;width:14.00px;height:14.00px;background:#9e9e9e;border-radius:50%"></div>
<div class="t" style="right:363.00px;top:463.76px;font-size:9.5px;color:#fff;font-weight:400;transform:translateX(50%)">2</div>
<div style="position:absolute;left:0;top:0;width:990px;height:489px;overflow:hidden"><div class="t" style="left:270.40px;width:80px;text-align:center;top:482.86px;font-size:9.7px;color:#5f6368">13/2/24</div><div class="t" style="left:347.75px;width:80px;text-align:center;top:482.86px;font-size:9.7px;color:#5f6368">24/2/24</div><div class="t" style="left:425.10px;width:80px;text-align:center;top:482.86px;font-size:9.7px;color:#5f6368">6/3/24</div><div class="t" style="left:502.45px;width:80px;text-align:center;top:482.86px;font-size:9.7px;color:#5f6368">17/3/24</div><div class="t" style="left:579.80px;width:80px;text-align:center;top:482.86px;font-size:9.7px;color:#5f6368">28/3/24</div><div class="t" style="left:657.15px;width:80px;text-align:center;top:482.86px;font-size:9.7px;color:#5f6368">8/4/24</div><div class="t" style="left:734.50px;width:80px;text-align:center;top:482.86px;font-size:9.7px;color:#5f6368">19/4/24</div><div class="t" style="left:811.85px;width:80px;text-align:center;top:482.86px;font-size:9.7px;color:#5f6368">30/4/24</div><div class="t" style="left:889.20px;width:80px;text-align:center;top:482.86px;font-size:9.7px;color:#5f6368">11/5/24</div></div>
<div style="position:absolute;left:289.40px;top:513.60px;width:656.60px;height:50.60px;border:1px solid #eceef0;border-radius:10px;box-sizing:border-box"></div>
<svg style="position:absolute;left:0.00px;top:500.00px;" width="400" height="60" viewBox="0 0 400 60"><circle cx="317.6" cy="38.6" r="7.5" fill="#188038"/><path d="M313 38.7L316.2 41.8L322.4 35.6" fill="none" stroke="#e8fff0" stroke-width="1.7"/></svg>
<div class="t" style="left:339.40px;top:533.27px;font-size:11.5px;color:#1f1f1f;font-weight:400;">Ver datos sobre páginas indexadas</div>
<svg style="position:absolute;left:914.50px;top:534.00px;" width="8" height="10" viewBox="0 0 8 10"><path d="M1.2 0.8l4.3 4.2L1.2 9.2" fill="none" stroke="#5f6368" stroke-width="1.4"/></svg>
<div style="position:absolute;left:264.20px;top:613.70px;width:705.80px;height:360.40px;background:#fff;border-radius:16px"></div>
<svg style="position:absolute;left:282.90px;top:640.80px;" width="26" height="26" viewBox="0 0 26 26"><circle cx="13" cy="13" r="12.8" fill="#9e9e9e"/><rect x="11.6" y="11" width="2.8" height="8.5" fill="#fff"/><circle cx="13" cy="7.6" r="1.6" fill="#fff"/></svg>
<div class="t" style="left:330.20px;top:642.15px;font-size:16.6px;color:#303134;font-weight:400;">¿Por qué hay páginas que no se indexan?</div>
<div class="t" style="left:330.20px;top:665.05px;font-size:11.4px;color:#80868b;font-weight:400;">Las páginas no indexadas no pueden aparecer en Google</div>
<svg style="position:absolute;left:930.00px;top:645.00px;" width="20" height="20" viewBox="0 0 20 20"><path d="M5.9 6.9h12.3M8.1 10.8h8.1M11.1 14.6h2" stroke="#444746" stroke-width="1.8" stroke-linecap="round"/></svg>
<div class="t" style="left:283.60px;top:714.46px;font-size:9.5px;color:#5f6368;font-weight:400;">Motivo</div>
<div class="t" style="left:562.30px;top:714.88px;font-size:9px;color:#5f6368;font-weight:400;">Fuente</div>
<svg style="position:absolute;left:599.00px;top:713.20px;" width="12" height="12" viewBox="0 0 12 12"><circle cx="6" cy="6" r="5.2" fill="none" stroke="#5f6368" stroke-width="1.1"/><path d="M4.5 4.8a1.5 1.5 0 1 1 2.3 1.3c-.5.3-.8.6-.8 1.2" fill="none" stroke="#5f6368" stroke-width="1.1"/><circle cx="6" cy="8.9" r=".7" fill="#5f6368"/></svg>
<div class="t" style="left:695.20px;top:714.37px;font-size:9.6px;color:#1f1f1f;font-weight:400;-webkit-text-stroke:0.2px #1f1f1f">Validación</div>
<svg style="position:absolute;left:744.50px;top:713.50px;" width="10" height="11" viewBox="0 0 10 11"><path d="M5 0.5v9M1 5.8l4 4 4-4" fill="none" stroke="#1f1f1f" stroke-width="1.3"/></svg>
<div class="t" style="left:803.50px;top:714.37px;font-size:9.6px;color:#5f6368;font-weight:400;">Tendencia</div>
<div class="t" style="right:38.50px;top:714.37px;font-size:9.6px;color:#5f6368;font-weight:400;">Páginas</div>
<div style="position:absolute;left:264.20px;top:741.00px;width:705.80px;height:1.00px;background:#e8eaed"></div>
<div class="t" style="left:283.60px;top:754.73px;font-size:10px;color:#3c4043;font-weight:400;">Página con redirección</div>
<div class="t" style="left:562.30px;top:754.57px;font-size:10.2px;color:#3c4043;font-weight:400;">Sitio web</div>
<svg style="position:absolute;left:696.30px;top:751.80px;" width="16" height="16" viewBox="0 0 16 16"><circle cx="8" cy="8" r="7" fill="none" stroke="#5f6368" stroke-width="1.4"/><path d="M7.6 4v4.3l3 2.2" fill="none" stroke="#5f6368" stroke-width="1.4"/></svg>
<div class="t" style="left:719.90px;top:754.73px;font-size:10px;color:#80868b;font-weight:400;">Iniciada</div>
<div class="t" style="right:38.50px;top:754.73px;font-size:10px;color:#3c4043;font-weight:400;">9</div>
<div style="position:absolute;left:264.20px;top:778.85px;width:705.80px;height:1.00px;background:#e8eaed"></div>
<div class="t" style="left:283.60px;top:792.78px;font-size:10px;color:#3c4043;font-weight:400;">No se ha encontrado (404)</div>
<div class="t" style="left:562.30px;top:792.62px;font-size:10.2px;color:#3c4043;font-weight:400;">Sitio web</div>
<svg style="position:absolute;left:696.30px;top:789.65px;" width="16" height="16" viewBox="0 0 16 16"><circle cx="8" cy="8" r="7" fill="none" stroke="#5f6368" stroke-width="1.4"/><path d="M7.6 4v4.3l3 2.2" fill="none" stroke="#5f6368" stroke-width="1.4"/></svg>
<div class="t" style="left:719.90px;top:792.78px;font-size:10px;color:#80868b;font-weight:400;">Iniciada</div>
<div class="t" style="right:38.50px;top:792.78px;font-size:10px;color:#3c4043;font-weight:400;">7</div>
<div style="position:absolute;left:264.20px;top:816.70px;width:705.80px;height:1.00px;background:#e8eaed"></div>
<div class="t" style="left:283.60px;top:830.83px;font-size:10px;color:#3c4043;font-weight:400;">Excluida por una etiqueta "noindex"</div>
<div class="t" style="left:562.30px;top:830.67px;font-size:10.2px;color:#3c4043;font-weight:400;">Sitio web</div>
<svg style="position:absolute;left:696.30px;top:827.50px;" width="16" height="16" viewBox="0 0 16 16"><circle cx="8" cy="8" r="7" fill="none" stroke="#5f6368" stroke-width="1.4"/><path d="M7.6 4v4.3l3 2.2" fill="none" stroke="#5f6368" stroke-width="1.4"/></svg>
<div class="t" style="left:719.90px;top:830.83px;font-size:10px;color:#80868b;font-weight:400;">Iniciada</div>
<div class="t" style="right:38.50px;top:830.83px;font-size:10px;color:#3c4043;font-weight:400;">3</div>
<div style="position:absolute;left:264.20px;top:854.55px;width:705.80px;height:1.00px;background:#e8eaed"></div>
<div class="t" style="left:283.60px;top:868.88px;font-size:10px;color:#3c4043;font-weight:400;">Descubierta: actualmente sin indexar</div>
<div class="t" style="left:562.30px;top:868.72px;font-size:10.2px;color:#3c4043;font-weight:400;">Sistemas de Google</div>
<svg style="position:absolute;left:696.30px;top:865.35px;" width="16" height="16" viewBox="0 0 16 16"><circle cx="8" cy="8" r="7" fill="none" stroke="#5f6368" stroke-width="1.4"/><path d="M7.6 4v4.3l3 2.2" fill="none" stroke="#5f6368" stroke-width="1.4"/></svg>
<div class="t" style="left:719.90px;top:868.88px;font-size:10px;color:#80868b;font-weight:400;">Iniciada</div>
<div class="t" style="right:38.50px;top:868.88px;font-size:10px;color:#3c4043;font-weight:400;">5</div>
<div style="position:absolute;left:264.20px;top:892.40px;width:705.80px;height:1.00px;background:#e8eaed"></div>
<div class="t" style="left:283.60px;top:906.93px;font-size:10px;color:#3c4043;font-weight:400;">Rastreada: actualmente sin indexar</div>
<div class="t" style="left:562.30px;top:906.77px;font-size:10.2px;color:#3c4043;font-weight:400;">Sistemas de Google</div>
<svg style="position:absolute;left:696.30px;top:903.20px;" width="16" height="16" viewBox="0 0 16 16"><circle cx="8" cy="8" r="7" fill="none" stroke="#5f6368" stroke-width="1.4"/><path d="M7.6 4v4.3l3 2.2" fill="none" stroke="#5f6368" stroke-width="1.4"/></svg>
<div class="t" style="left:719.90px;top:906.93px;font-size:10px;color:#80868b;font-weight:400;">Iniciada</div>
<div class="t" style="right:38.50px;top:906.93px;font-size:10px;color:#3c4043;font-weight:400;">4</div>
<div style="position:absolute;left:264.20px;top:930.25px;width:705.80px;height:1.00px;background:#e8eaed"></div>
<svg style="position:absolute;left:0.00px;top:0.00px;pointer-events:none" width="990" height="1024" viewBox="0 0 990 1024"><polyline points="803.6,760.9 834.5,760.9 837.6,759.1 842.7,757.3 846.4,754.5 852.7,754.5" fill="none" stroke="#757575" stroke-width="1.5" stroke-linejoin="round"/><polyline points="803.6,800.9 825.5,800.9 827.5,799.1 835.5,799.1 841.8,795.5 845.0,794.4 852.7,794.2" fill="none" stroke="#757575" stroke-width="1.5" stroke-linejoin="round"/><polyline points="803.6,839.0 826.4,839.0 829.0,838.1 839.0,838.1 845.5,836.8 852.7,836.5" fill="none" stroke="#757575" stroke-width="1.5" stroke-linejoin="round"/><polyline points="803.6,876.8 805.5,876.8 808.2,865.9 816.4,865.9 819.1,869.5 823.6,871.0 843.6,871.0 846.4,872.3 852.7,872.3" fill="none" stroke="#757575" stroke-width="1.5" stroke-linejoin="round"/><polyline points="803.6,914.1 828.2,914.1 832.7,913.2 840.0,913.2 843.6,912.3 846.4,909.2 849.0,909.5 852.7,911.0" fill="none" stroke="#757575" stroke-width="1.5" stroke-linejoin="round"/></svg>
<div class="t" style="left:692.10px;top:948.33px;font-size:10px;color:#70757a;font-weight:400;">Filas por página:</div>
<div class="t" style="left:781.50px;top:948.33px;font-size:10px;color:#3c4043;font-weight:400;">10</div>
<svg style="position:absolute;left:804.00px;top:950.80px;" width="9" height="4" viewBox="0 0 9 4"><path d="M0 0h9L4.5 4z" fill="#9aa0a6"/></svg>
<div class="t" style="left:842.10px;top:948.03px;font-size:10px;color:#5f6368;font-weight:400;letter-spacing:-0.2px">1-5 de 5</div>
<svg style="position:absolute;left:907.50px;top:947.50px;" width="7" height="9" viewBox="0 0 7 9"><path d="M6 0.8L1.5 4.5 6 8.2" fill="none" stroke="#bdc1c6" stroke-width="1.3"/></svg>
<svg style="position:absolute;left:941.50px;top:947.50px;" width="7" height="9" viewBox="0 0 7 9"><path d="M1 0.8l4.5 3.7L1 8.2" fill="none" stroke="#bdc1c6" stroke-width="1.3"/></svg>
</body></html>
